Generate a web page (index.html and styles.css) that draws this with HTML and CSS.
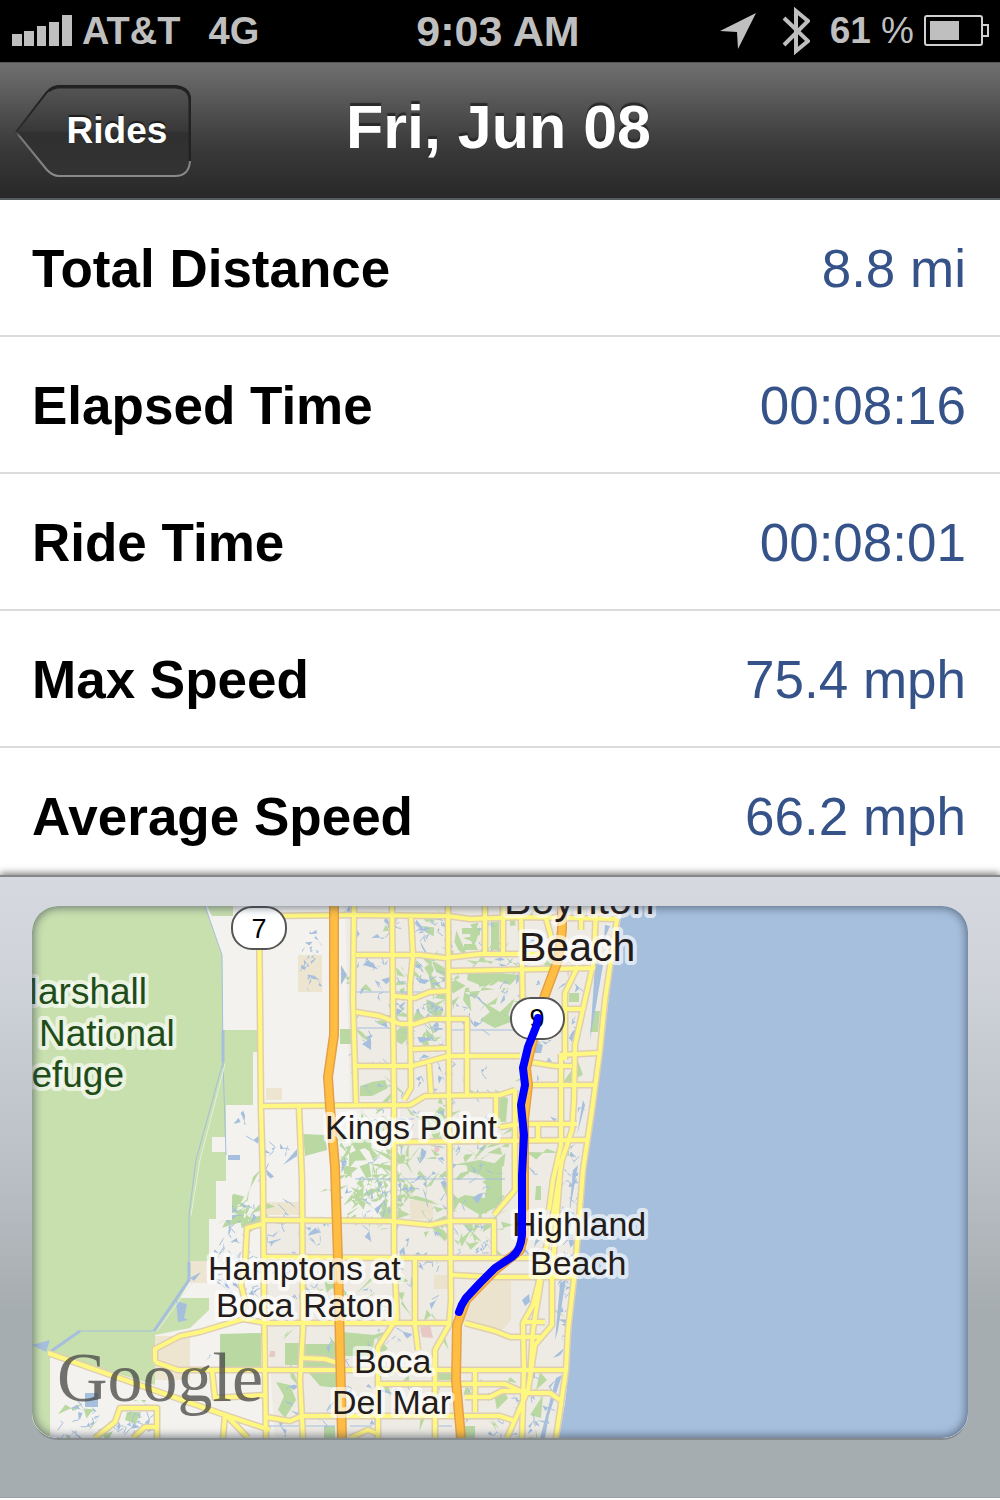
FILE: index.html
```html
<!DOCTYPE html>
<html lang="en">
<head>
	<meta charset="utf-8">
	<meta name="viewport" content="width=device-width, initial-scale=1">
	<title>Fri, Jun 08</title>
	<link rel="stylesheet" href="styles.css">
</head>
<body>
	<!-- Status bar -->
	<div class="status">
		<div class="status-left">
			<svg class="signal" width="60" height="32" viewBox="0 0 60 32">
				<path d="M0 19h10v12H0zM12 16h10v15H12zM25 11h9v20H25zM37 7h10v24H37zM50 0h10v31H50z"/>
			</svg>
			<span class="carrier">AT&amp;T</span>
			<span class="network">4G</span>
		</div>
		<div class="clock">9:03 AM</div>
		<div class="status-right">
			<svg class="location" width="36" height="36" viewBox="0 0 36 36">
				<path d="M36 0L18 36 17 19 0 18z"/>
			</svg>
			<svg class="bluetooth" width="28" height="50" viewBox="0 0 28 50">
				<path d="M2 12L26 35 14 45V5l12 10L2 39"/>
			</svg>
			<span class="percent">61 <span class="sign">%</span></span>
			<svg class="battery" width="66" height="32" viewBox="0 0 66 32">
				<rect class="case" x="1" y="1" width="57" height="29" rx="2"/>
				<path class="case" d="M59 10h5v11h-5"/>
				<rect class="charge" x="6" y="6" width="29" height="19"/>
			</svg>
		</div>
	</div>

	<!-- Title bar -->
	<header class="navbar">
		<button class="back" type="button">
			<svg class="back-shape" viewBox="0 0 176 94" preserveAspectRatio="none">
				<defs>
					<linearGradient id="backFill" x1="0" y1="0" x2="0" y2="1">
						<stop offset="0" stop-color="#555"/>
						<stop offset=".5" stop-color="#383838"/>
						<stop offset=".52" stop-color="#303030"/>
						<stop offset="1" stop-color="#333"/>
					</linearGradient>
					<linearGradient id="backEdge" x1="0" y1="0" x2="0" y2="1">
						<stop offset="0" stop-color="#1e1e1e"/>
						<stop offset=".5" stop-color="#2b2b2b"/>
						<stop offset=".56" stop-color="#777"/>
						<stop offset="1" stop-color="#8a8a8a"/>
					</linearGradient>
				</defs>
				<path fill="url(#backFill)" stroke="url(#backEdge)" stroke-width="2" d="M1 48L32 8Q38 2 44 2H160Q175 3 175 17V77Q174 92 160 92H44Q38 92 32 86Z"/>
				<path fill="none" stroke="#222" stroke-width="3" d="M34 7Q38 3 44 3H160Q175 4 175 17V77"/>
			</svg>
			<span class="back-label">Rides</span>
		</button>
		<h1 class="title">Fri, Jun 08</h1>
	</header>

	<!-- Ride totals -->
	<dl class="stats">
		<div class="row"><dt>Total Distance</dt><dd>8.8 mi</dd></div>
		<div class="row"><dt>Elapsed Time</dt><dd>00:08:16</dd></div>
		<div class="row"><dt>Ride Time</dt><dd>00:08:01</dd></div>
		<div class="row"><dt>Max Speed</dt><dd>75.4 mph</dd></div>
		<div class="row"><dt>Average Speed</dt><dd>66.2 mph</dd></div>
	</dl>

	<!-- Route map -->
	<section class="panel">
		<div class="map">
			<svg class="map-art" viewBox="32 906 936 532">
				<defs>
					<clipPath id="land">
						<path d="M340 906H610L603 1000 588 1120 578 1220 566 1350 555 1438H50V1400L160 1400 270 1300 214 1290V1220H232V1100H345Z"/>
					</clipPath>
					<!-- drawn twice below: wide casing, then the road itself -->
					<g id="roads">
						<path d="M259 906L261 1110 263 1180 264 1300 266 1438M299 1108L302 1180 303 1330 300 1380 303 1438M354 906L353 1000 356 1103M392 906L394 1100 394 1250 397 1318 378 1347 378 1438M411 918L413 955 410 985 411 1088 404 1100M448 906L449 1100 451 1300 449 1325 435 1350V1438M485 906V952M503 906V952M521 918L523 1015"/>
						<path d="M265 916L355 915 448 916 470 919 520 917 617 919M356 955H420L445 958 480 954H565M450 971L595 968M263 1106L410 1105 425 1096 500 1095 515 1090M356 1066H412L448 1056H520M356 1012L380 1016 400 1024H415L430 1019H467V1095M394 996L415 998 430 992 448 991M413 1049L448 1048M429 1064L431 1093M394 1142L586 1140M528 1085H597M500 1127L520 1124H577M560 1055L598 1053M530 1062L555 1066H572M566 1009H583M496 1096V1128M538 1124V1140"/>
						<path d="M241 1315L245 1300 241 1285 245 1265 247 1228 262 1224M262 1220L390 1221 430 1225 450 1221H494V1255M494 1215L515 1190V1090M264 1257L400 1258H535M452 1275L490 1277H572M155 1362V1349L180 1336 200 1332 243 1319 266 1323H450M155 1362L178 1370H567M415 1258V1325L418 1350M465 1323L495 1331 510 1337H540M303 1358L325 1359 338 1363M378 1384H505L525 1393 550 1393 560 1400M465 1397H490L502 1391H530M475 1370V1412M266 1417L290 1421 302 1416H500L515 1421"/>
						<path d="M48 1353L225 1415 270 1430M95 1438L115 1422 120 1408H157V1438M133 1438L145 1427H156M225 1415L223 1438M228 1417L248 1438M212 1370L215 1398 265 1395M350 1438L368 1430 378 1434"/>
						<path d="M545 915L552 940M581 906V930M596 906L594 960 585 1000 575 1045 574 1100 572 1130 562 1160 553 1215 540 1277 533 1305 523 1323 524 1367 522 1438M578 966L565 993V1060M561 1054V1145L553 1180 549 1210M561 1160L552 1277V1325L535 1345 528 1390 507 1438M541 1280L533 1330 530 1380M522 1322H545M617 919L605 1000 600 1050 592 1110 583 1170 575 1270 568 1330 566 1370 556 1438"/>
					</g>
					<g id="highways">
						<path d="M334 906V1035L328 1077 330 1107 335 1167 338 1260 342 1438"/>
						<path d="M562 906V930L558 960 545 995 536 1027 526 1068 528 1085 524 1120 524 1235 520 1250 495 1270 466 1300 457 1325 456 1380 461 1438"/>
					</g>
				</defs>
				<rect class="ground" x="32" y="906" width="936" height="532"/>
				<path class="town" d="M345 906H630L600 1100 560 1438H275L260 1220H400V1100H350Z"/>

				<!-- wildlife refuge -->
				<path class="refuge" d="M32 906H205L222 955 223 1030H258V1052H253V1105H226V1137H212V1152H226V1181H216V1219H209V1261H190V1280L180 1298H209V1310L190 1328 155 1335V1385L50 1353V1438H32Z"/>
				<path class="refuge" d="M207 906H233V916H212Z"/>
				<path class="sand" d="M190 1261H207V1283H190ZM155 1336H190V1380H155ZM298 955H322V992H298ZM434 1275H448V1289H434ZM478 1290L490 1280H511V1320L500 1333 462 1320Z"/>
				<path class="sand" d="M267 1202H299V1215H267ZM266 1088H282V1100H266ZM410 1200H433V1219H410Z"/>

				<!-- parks and ponds are scattered here by map.js -->
				<path class="park" d="M462 928H480V935L472 937 478 950H464V944H472L470 934H462ZM491 922H499V950H491ZM468 970L520 975 510 985 495 980 485 987 467 980ZM480 1000L500 1012 515 998 508 1015 516 1020 495 1028 480 1020 490 1012ZM340 1029H352V1044H340ZM569 993H579V1002H569ZM594 1011H600L598 1032H590ZM360 1086L372 1082 385 1080 388 1088 372 1096H360ZM499 1096L508 1098 506 1122H498ZM451 1165L480 1160 502 1165V1205L480 1215 455 1200 465 1195 485 1198 487 1180 465 1165ZM536 1186H541V1200H535Z"/>
				<path class="park" d="M220 1334L261 1333V1367H220ZM285 1343H301V1365H285ZM304 1344H338V1388L320 1386 308 1372H304ZM342 1332L375 1335 372 1356H344ZM438 1369H455V1380H438ZM276 1382L290 1385 296 1400 285 1418 278 1410 284 1396ZM127 1412L140 1412 136 1424 125 1420ZM540 1372L547 1380 536 1390ZM530 1415L543 1395 541 1418ZM324 1426H335V1438H324ZM464 1426H475V1438H464ZM303 1134L325 1135 327 1150 305 1156Z"/>
				<g clip-path="url(#land)">
					<path class="park" id="parks"/>
					<path class="pond" id="ponds"/>
					<path class="creek" id="creeks"/>
				</g>
				<path class="pond" id="fieldPonds"/>
				<path class="school" d="M270 1351H275V1357H269ZM435 1145L440 1149 438 1152H434ZM567 972L570 970 568 977ZM420 1327L430 1325 433 1338 422 1337Z"/>
				<path class="pond" d="M32 1345L50 1340 46 1352ZM176 1301L187 1304 184 1318 188 1320 178 1322ZM190 1278L201 1272 194 1281ZM85 1393H98V1407H85ZM228 1155H240V1160H228ZM535 1042L543 1045 541 1053H535ZM605 925L610 926 604 940ZM595 960L603 965 597 1000 590 1040 594 980ZM583 1100L585 1105 577 1135ZM573 1170L578 1165 569 1215ZM560 1285L566 1278 558 1330 555 1340ZM556 1378L562 1375 549 1415 545 1438H540ZM522 1300L529 1294 530 1302 525 1306ZM283 1165L297 1149V1156ZM341 965L347 975 341 985ZM362 1044L371 1038V1050Z"/>
				<path class="creek" d="M205 906L222 955 223 1062 226 1155M355 1179H505M353 992H445M353 1028H395M450 1030H515M350 1426H372M436 1426H452M226 1416L264 1427M269 1426H335"/>
				<path class="canal" d="M223 1030V1062M189 1262V1280L154 1331M80 1331L50 1352"/>
				<path class="creek" d="M223 1062L196 1160 189 1215V1262M154 1331H80"/>
				<path class="canal-edge" d="M225 1064L200 1160 191 1215M192 1283L157 1331"/>

				<!-- ocean -->
				<path class="sea" d="M968 906H623L620 923 613 963 607 1013 602 1057 595 1103 587 1157 580 1237 577 1277 572 1320 568 1377 565 1403 559 1438H968Z"/>

				<use href="#roads" class="road-casing"/>
				<use href="#roads" class="road"/>
				<use href="#highways" class="highway-casing"/>
				<use href="#highways" class="highway"/>

				<!-- route shields -->
				<rect class="shield" x="232" y="907" width="54" height="42" rx="20"/>
				<text class="shield-text" x="259" y="938">7</text>
				<rect class="shield" x="511" y="998" width="53" height="41" rx="20"/>
				<text class="shield-text" x="537" y="1028">9</text>

				<!-- place names -->
				<text class="place refuge-name end" x="147" y="1004">Marshall</text>
				<text class="place refuge-name" x="39" y="1046">National</text>
				<text class="place refuge-name end" x="124" y="1087">Refuge</text>
				<text class="place city" x="504" y="914">Boynton</text>
				<text class="place city" x="519" y="961">Beach</text>
				<text class="place" x="325" y="1139">Kings Point</text>
				<text class="place" x="512" y="1236">Highland</text>
				<text class="place" x="530" y="1275">Beach</text>
				<text class="place" x="208" y="1280">Hamptons at</text>
				<text class="place" x="216" y="1317">Boca Raton</text>
				<text class="place" x="354" y="1373">Boca</text>
				<text class="place" x="332" y="1414">Del Mar</text>
				<text class="google" x="57" y="1401">Google</text>

				<!-- recorded ride -->
				<path class="ride" d="M538 1018L536 1027 528 1047 523 1068 525 1085 521 1105 524 1135 522 1175V1235Q521 1250 512 1257L495 1268 480 1283 466 1298Q461 1305 459 1312"/>
			</svg>
		</div>
	</section>

	<script src="map.js"></script>
</body>
</html>
```

FILE: styles.css
```css
body {
	margin: 0;
	background: #fff;
	font-family: "Liberation Sans", Arial, Helvetica, sans-serif;
}

/* Status bar */
.status {
	display: grid;
	grid-template-columns: 1fr auto 1fr;
	align-items: center;
	height: 62px;
	padding: 0 10px 0 12px;
	background: #000;
	color: #bfbfbf;
	font-size: 38px;
	font-weight: bold;
}

.status svg {
	fill: #bfbfbf;
}

.status-left,
.status-right {
	display: flex;
	align-items: center;
}

.status-right {
	justify-content: flex-end;
}

.carrier {
	margin-left: 10px;
}

.network {
	margin-left: 28px;
}

.clock {
	margin-right: 6px;
	font-size: 43px;
}

.location {
	margin-right: 26px;
}

.status .bluetooth {
	fill: none;
	stroke: #bfbfbf;
	stroke-width: 4px;
	margin-right: 20px;
}

.percent {
	font-size: 37px;
	margin-right: 10px;
}

.sign {
	font-weight: normal;
}

.status .case {
	fill: none;
	stroke: #d0d0d0;
	stroke-width: 2px;
}

/* Title bar */
.navbar {
	display: grid;
	grid-template-columns: 1fr auto 1fr;
	align-items: center;
	box-sizing: border-box;
	height: 138px;
	padding: 0 18px 0 15px;
	border-top: 1px solid #555;
	border-bottom: 2px solid #565b5e;
	background: linear-gradient(#707070, #4c4c4c 40%, #383838 65%, #282828);
}

.back {
	position: relative;
	justify-self: start;
	width: 176px;
	height: 94px;
	padding: 0 0 0 28px;
	border: 0;
	background: none;
	color: #fff;
	font: bold 37px "Liberation Sans", Arial, sans-serif;
	text-shadow: 0 -2px 1px #1c1c1c;
}

.back-shape {
	position: absolute;
	top: 0;
	left: 0;
	width: 100%;
	height: 100%;
}

.back-label {
	position: relative;
}

.title {
	margin: 0;
	padding-bottom: 8px;
	color: #fff;
	font-size: 61px;
	line-height: 70px;
	text-shadow: 0 -3px 1px #2a2a2a;
}

/* Ride totals */
.stats {
	margin: 0;
}

.row {
	display: flex;
	justify-content: space-between;
	border-bottom: 2px solid #dcdcdc;
	padding: 2px 34px 0 32px;
	font-size: 53px;
	line-height: 133px;
}

.row dt {
	font-weight: bold;
	color: #000;
}

.row dd {
	margin: 0;
	color: #355289;
}

/* the map panel slides over the foot of the last row */
.row:last-child {
	margin-bottom: -10px;
}

/* Map */
.panel {
	position: relative;
	padding: 29px 32px 57px;
	border-top: 2px solid #85888b;
	border-bottom: 1px solid #9aa2a6;
	background: linear-gradient(#d5d9df, #d0d4da 15%, #b9bfc4 48%, #a6adb0 70%);
	box-shadow: 0 -2px 7px rgba(0, 0, 0, 0.5);
}

.map {
	position: relative;
	overflow: hidden;
	border-radius: 26px;
	border-bottom: 2px solid #858a8d;
}

.map::after {
	content: "";
	position: absolute;
	inset: 0;
	border-radius: 26px;
	box-shadow: inset 0 0 8px 2px rgba(50, 60, 80, 0.6);
}

.map-art {
	display: block;
	width: 100%;
}

.ground {
	fill: #f3f2ee;
}

.town {
	fill: #eeebe4;
}

.refuge {
	fill: #c8dfae;
}

.park {
	fill: #b9d8a2;
}

.sand {
	fill: #ebdfc4;
	fill-opacity: 0.7;
}

.school {
	fill: #e8c8c4;
}

.pond,
.sea {
	fill: #a5bfdd;
}

.creek {
	fill: none;
	stroke: #a5bfdd;
	stroke-width: 1px;
}

.canal {
	fill: none;
	stroke: #a5bfdd;
	stroke-width: 3px;
}

.canal-edge {
	fill: none;
	stroke: #e6efdd;
	stroke-width: 1px;
}

.road,
.road-casing,
.highway,
.highway-casing {
	fill: none;
	stroke-linejoin: round;
}

.road-casing {
	stroke: #e0ceb0;
	stroke-width: 7px;
}

.road {
	stroke: #fff880;
	stroke-width: 4px;
}

.highway-casing {
	stroke: #e3a04a;
	stroke-width: 10px;
}

.highway {
	stroke: #ffbe42;
	stroke-width: 7px;
}

.shield {
	fill: #fff;
	stroke: #555;
	stroke-width: 2px;
}

.shield-text {
	font-size: 27px;
	text-anchor: middle;
}

.place {
	fill: #231c1a;
	stroke: rgba(255, 255, 255, 0.65);
	stroke-width: 8px;
	stroke-linejoin: round;
	paint-order: stroke;
	font-size: 34px;
}

.city {
	font-size: 41px;
}

.refuge-name {
	fill: #1f4d1a;
	font-size: 37px;
}

.end {
	text-anchor: end;
}

.google {
	fill: #444;
	fill-opacity: 0.75;
	font-family: "Liberation Serif", "Times New Roman", serif;
	font-size: 70px;
}

.ride {
	fill: none;
	stroke: #0000fe;
	stroke-width: 8px;
	stroke-linecap: round;
	stroke-linejoin: round;
}
```

FILE: map.js
```javascript
// Scatter the small golf courses, ponds and ditches over the suburbs.
var seed = 7;

function rnd(min, max) {
	seed = (seed * 16807) % 2147483647;
	return min + (max - min) * (seed / 2147483647);
}

// areas: x, y, width, height, parks, ponds
var areas = [
	[350, 910, 100, 80, 10, 40],
	[390, 955, 60, 100, 26, 20],
	[450, 920, 75, 110, 20, 30],
	[350, 990, 100, 110, 8, 30],
	[450, 1030, 80, 110, 6, 8],
	[342, 1140, 60, 90, 55, 24],
	[395, 1140, 110, 85, 50, 30],
	[355, 1105, 95, 35, 14, 12],
	[450, 1225, 50, 30, 6, 10],
	[345, 1225, 100, 95, 12, 24],
	[218, 1200, 42, 22, 18, 8],
	[210, 1220, 50, 90, 2, 32],
	[265, 1200, 70, 55, 0, 16],
	[232, 1110, 60, 70, 0, 10],
	[265, 1260, 70, 60, 4, 14],
	[165, 1340, 50, 35, 0, 18],
	[52, 1400, 100, 38, 8, 30],
	[270, 1330, 180, 105, 12, 30],
	[465, 1370, 85, 68, 6, 22],
	[530, 960, 60, 180, 2, 16],
	[530, 1140, 50, 180, 6, 16],
	[562, 1140, 20, 210, 0, 40]
];

function blob(x, y, size) {
	var d = "M" + x.toFixed(1) + " " + y.toFixed(1);
	for (var i = 0; i < 3; i++) {
		d += "l" + rnd(-size, size).toFixed(1) + " " + rnd(-size, size).toFixed(1);
	}
	return d + "Z";
}

var parks = "", ponds = "", creeks = "", fieldPonds = "";

areas.forEach(function(a) {
	var i, x, y;
	for (i = 0; i < a[4]; i++) {
		parks += blob(a[0] + rnd(0, a[2]), a[1] + rnd(0, a[3]), 13);
	}
	for (i = 0; i < a[5]; i++) {
		x = a[0] + rnd(0, a[2]);
		y = a[1] + rnd(0, a[3]);
		ponds += blob(x, y, 6);
		creeks += "M" + x.toFixed(1) + " " + y.toFixed(1) + "l" + rnd(-7, 7).toFixed(1) + " " + rnd(-7, 7).toFixed(1);
	}
});

// ponds in the fields along the turnpike
for (var k = 0; k < 24; k++) {
	fieldPonds += blob(rnd(302, 320), rnd(932, 990), 5);
}

document.getElementById("parks").setAttribute("d", parks);
document.getElementById("ponds").setAttribute("d", ponds);
document.getElementById("creeks").setAttribute("d", creeks);
document.getElementById("fieldPonds").setAttribute("d", fieldPonds);
```
